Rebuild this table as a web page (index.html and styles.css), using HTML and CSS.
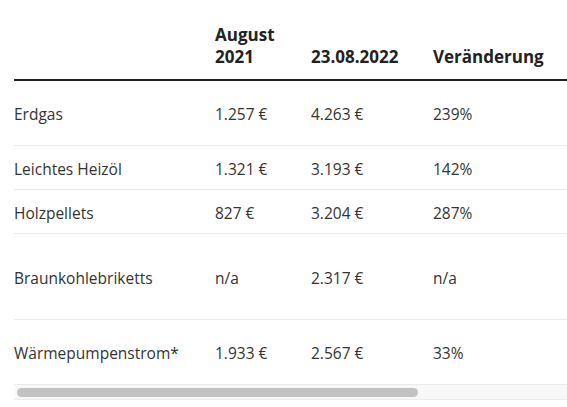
FILE: index.html
```html
<!DOCTYPE html>
<html lang="de">
<head>
<meta charset="utf-8">
<link rel="stylesheet" href="styles.css">
</head>
<body>
<div class="wrap">
  <div class="scroller">
    <table class="prices">
      <thead>
        <tr>
          <th class="c1"></th>
          <th class="c2">August<br>2021</th>
          <th class="c3">23.08.2022</th>
          <th class="c4">Veränderung</th>
        </tr>
      </thead>
      <tbody>
        <tr class="r1"><td>Erdgas</td><td>1.257 €</td><td>4.263 €</td><td>239%</td></tr>
        <tr class="r2"><td>Leichtes Heizöl</td><td>1.321 €</td><td>3.193 €</td><td>142%</td></tr>
        <tr class="r3"><td>Holzpellets</td><td>827 €</td><td>3.204 €</td><td>287%</td></tr>
        <tr class="r4"><td>Braunkohlebriketts</td><td>n/a</td><td>2.317 €</td><td>n/a</td></tr>
        <tr class="r5"><td>Wärmepumpenstrom*</td><td>1.933 €</td><td>2.567 €</td><td>33%</td></tr>
      </tbody>
    </table>
  </div>
  <div class="track"><div class="thumb"></div></div>
</div>
</body>
</html>
```
FILE: styles.css
```css
html, body {
  margin: 0;
  padding: 0;
  background: #fff;
}
body {
  font-family: "Open Sans", "Noto Sans", sans-serif;
  color: #333;
}
.wrap {
  padding-left: 14px;
}
.scroller {
  overflow: hidden;
}
.prices {
  border-collapse: collapse;
  width: 780px;
  table-layout: fixed;
}
.prices th {
  font-size: 17px;
  font-weight: 700;
  line-height: 22px;
  color: #222;
  text-align: left;
  vertical-align: bottom;
  padding: 24px 0 11px 0;
  border-bottom: 2px solid #222;
}
.prices .c1 { width: 201px; }
.prices .c2 { width: 96px; }
.prices .c3 { width: 122px; }
.prices td {
  font-size: 15.5px;
  line-height: 20px;
  padding: 2px 0 0 0;
  vertical-align: middle;
  border-bottom: 1px solid #ebebeb;
}
.r1 td { height: 62px; }
.r2 td { height: 41px; }
.r3 td { height: 41px; }
.r4 td { height: 83px; }
.r5 td { height: 62px; }
.track {
  background: #f8f8f8;
  border-bottom: 1px solid #ececec;
  padding: 3px 0 0 3px;
  box-sizing: border-box;
  height: 15px;
}
.thumb {
  width: 401px;
  height: 9px;
  border-radius: 5px;
  background: #c2c2c2;
}
```
